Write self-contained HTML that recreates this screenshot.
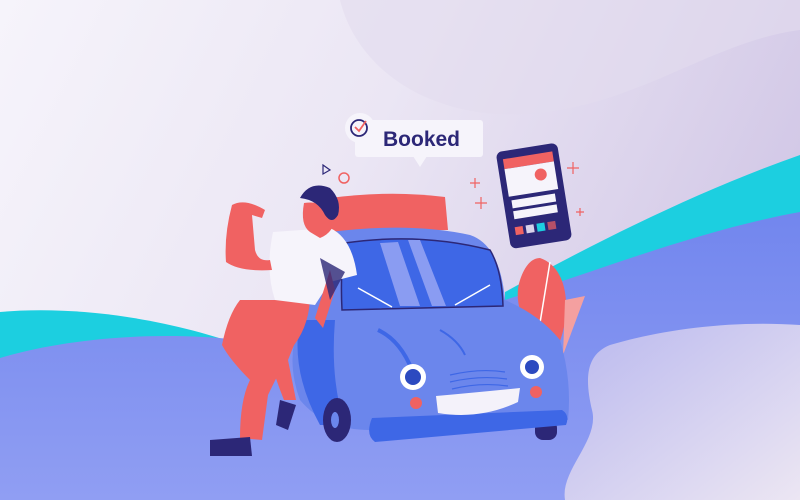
<!DOCTYPE html>
<html><head><meta charset="utf-8"><style>
html,body{margin:0;padding:0;width:800px;height:500px;overflow:hidden;background:#f4f2fa}
svg{display:block}
</style></head><body>
<svg width="800" height="500" viewBox="0 0 800 500" xmlns="http://www.w3.org/2000/svg">
<defs>
<linearGradient id="bg" x1="0" y1="0" x2="1" y2="0.3">
<stop offset="0" stop-color="#f6f4fb"/><stop offset="0.5" stop-color="#ebe6f4"/><stop offset="1" stop-color="#d3c9e7"/>
</linearGradient>
<linearGradient id="ground" x1="0" y1="0" x2="0" y2="1">
<stop offset="0" stop-color="#7286ee"/><stop offset="1" stop-color="#909ef3"/>
</linearGradient>
<linearGradient id="lav" x1="0" y1="0" x2="1" y2="1">
<stop offset="0" stop-color="#b9b8ee"/><stop offset="1" stop-color="#ece6f3"/>
</linearGradient>
</defs>
<rect width="800" height="500" fill="url(#bg)"/>
<path d="M340 0 C360 80 450 130 560 110 C650 95 720 40 800 30 L800 0Z" fill="#e2dcee" opacity="0.6"/>
<path d="M0 312 C80 305 170 320 240 345 L240 380 L0 380Z" fill="#1ccfe0"/>
<path d="M505 292 C600 240 700 190 800 155 L800 320 L505 330Z" fill="#1ccfe0"/>
<path d="M0 358 C60 340 150 330 240 340 C300 345 400 330 505 300 C600 270 700 230 800 212 L800 500 L0 500Z" fill="url(#ground)"/>
<path d="M610 345 C660 330 730 320 800 325 L800 500 L565 500 C560 470 600 440 592 410 C585 380 585 355 610 345Z" fill="url(#lav)"/>
<path d="M540 258 C575 270 570 330 553 355 C535 345 510 310 520 280 C525 265 532 258 540 258Z" fill="#f06262"/>
<path d="M565 300 L585 296 L563 355Z" fill="#f4a0a0"/>
<line x1="550" y1="262" x2="538" y2="335" stroke="#fff" stroke-width="1.5"/>
<path d="M330 198 Q390 190 445 197 L448 230 L330 232Z" fill="#f06262"/>
<path d="M330 232 Q410 222 470 235 Q500 245 505 300 Q540 315 560 340 Q572 380 568 420 L370 430 Q325 430 300 400 Q285 360 300 320 Q310 290 330 270Z" fill="#6b86ec"/>
<path d="M300 320 Q290 370 320 425 L345 425 Q330 380 335 320Z" fill="#3e67e6"/>
<path d="M345 243 Q420 232 490 250 Q502 270 503 306 L342 310 Q340 270 345 243Z" fill="#3e67e6" stroke="#2c2777" stroke-width="1.5"/>
<path d="M380 243 L400 306 L420 306 L398 242Z" fill="#8a9cf2"/>
<path d="M408 240 L432 306 L446 306 L420 240Z" fill="#8a9cf2"/>
<line x1="358" y1="288" x2="392" y2="307" stroke="#fff" stroke-width="1.5"/>
<line x1="455" y1="305" x2="490" y2="285" stroke="#fff" stroke-width="1.5"/>
<path d="M378 330 Q400 340 412 370" stroke="#3e67e6" stroke-width="4" fill="none"/>
<path d="M440 330 Q458 340 465 355" stroke="#3e67e6" stroke-width="2" fill="none"/>
<path d="M450 375 Q480 368 505 372 M450 382 Q480 375 507 379 M452 389 Q480 382 508 386" stroke="#3e67e6" stroke-width="1.2" fill="none"/>
<ellipse cx="337" cy="420" rx="14" ry="22" fill="#2c2777"/>
<ellipse cx="335" cy="420" rx="4" ry="8" fill="#6b86ec"/>
<rect x="535" y="420" width="22" height="20" rx="8" fill="#2c2777"/>
<path d="M372 418 L562 410 Q570 415 566 425 L375 442 Q365 435 372 418Z" fill="#3e67e6"/>
<circle cx="413" cy="377" r="13" fill="#fff"/><circle cx="413" cy="377" r="8" fill="#2c4ac0"/>
<circle cx="532" cy="367" r="12" fill="#fff"/><circle cx="532" cy="367" r="7" fill="#2c4ac0"/>
<circle cx="416" cy="403" r="6" fill="#f06262"/><circle cx="536" cy="392" r="6" fill="#f06262"/>
<path d="M436 396 Q480 392 520 388 L518 402 Q480 420 438 413Z" fill="#f4f2fa"/>
<!-- person -->
<path d="M240 300 L310 300 Q308 330 290 350 L268 395 L262 440 L240 438 Q240 400 250 380 Q230 360 222 345 Q228 315 240 300Z" fill="#f06262"/>
<path d="M300 330 L288 360 L296 400 L284 400 Q272 370 270 355Z" fill="#f06262"/>
<path d="M280 400 L296 405 L288 430 L276 425Z" fill="#2c2777"/>
<path d="M210 440 L250 437 L252 456 L210 456Z" fill="#2c2777"/>
<path d="M273 232 L330 228 Q352 238 357 275 L330 282 L315 305 L275 300 Q265 270 273 232Z" fill="#f6f4fb"/>
<path d="M330 270 L315 318 L323 328 L335 290 Z" fill="#f06262"/>
<path d="M320 258 L345 272 L330 300Z" fill="#2c2777" opacity="0.8"/>
<path d="M232 205 Q245 198 265 210 L262 218 L252 215 L255 250 Q258 262 270 260 L272 270 Q240 272 226 262 Q224 235 232 205Z" fill="#f06262"/>
<path d="M304 203 Q325 200 335 215 Q335 232 320 238 L310 232 Q300 225 304 203Z" fill="#f06262"/>
<path d="M300 198 Q310 180 330 188 Q342 200 338 215 Q332 225 325 215 Q318 200 300 198Z" fill="#2c2777"/>
<circle cx="344" cy="178" r="5" fill="none" stroke="#f06262" stroke-width="1.5"/>
<path d="M323 165 L330 170 L323 174Z" fill="none" stroke="#2c2777" stroke-width="1.2"/>
<g stroke="#f06262" stroke-width="1.2">
<path d="M475 178 v10 M470 183 h10"/><path d="M481 197 v12 M475 203 h12"/>
<path d="M573 162 v12 M567 168 h12"/><path d="M580 208 v8 M576 212 h8"/>
</g>
<rect x="355" y="120" width="128" height="37" rx="3" fill="#f6f4fb"/>
<path d="M413 156 L420 167 L427 156Z" fill="#f6f4fb"/>
<circle cx="360" cy="128" r="15" fill="#f6f4fb"/>
<circle cx="359" cy="128" r="8" fill="none" stroke="#2c2777" stroke-width="1.8"/>
<path d="M355 127 L359 131 L366 121" fill="none" stroke="#f06262" stroke-width="1.8"/>
<text x="383" y="146" font-family="Liberation Sans, sans-serif" font-size="21" font-weight="bold" fill="#2c2777">Booked</text>
<g transform="rotate(-9 533 196)">
<rect x="503" y="147" width="62" height="98" rx="6" fill="#2c2777"/>
<rect x="509" y="155" width="50" height="10" fill="#f06262"/>
<rect x="509" y="165" width="50" height="28" fill="#f6f4fb"/>
<circle cx="544" cy="176" r="6" fill="#f06262"/>
<rect x="511" y="197" width="44" height="8" fill="#f6f4fb"/>
<rect x="511" y="208" width="44" height="8" fill="#f6f4fb"/>
<rect x="510" y="224" width="8" height="8" fill="#f06262"/><rect x="521" y="224" width="8" height="8" fill="#d9d2ea"/>
<rect x="532" y="224" width="8" height="8" fill="#1ccfe0"/><rect x="543" y="224" width="8" height="8" fill="#f06262" opacity="0.7"/>
</g>
</svg>
</body></html>
